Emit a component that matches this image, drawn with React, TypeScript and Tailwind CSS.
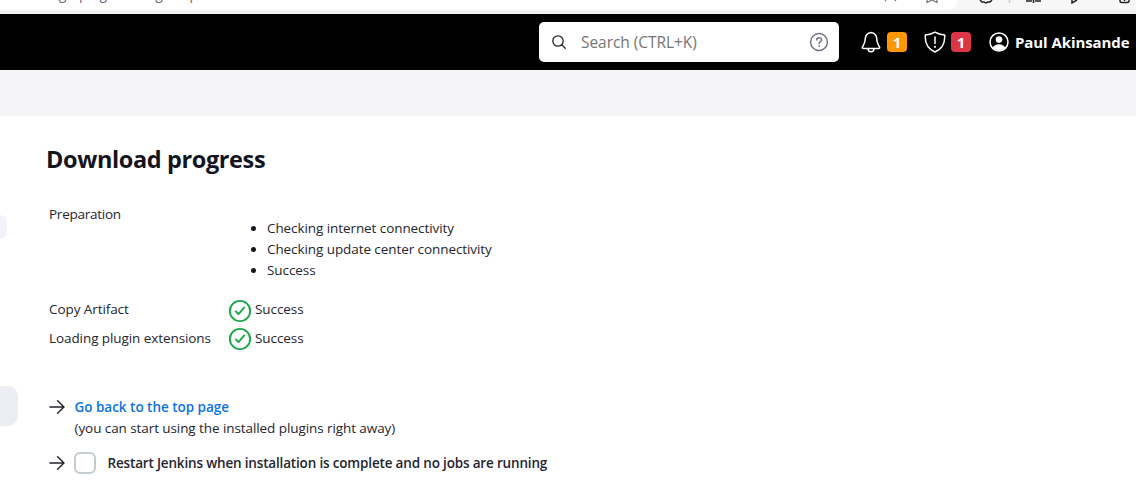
import type { ReactNode } from "react";

const CheckCircle = () => (
  <svg viewBox="0 0 512 512" className="h-[26px] w-[26px] shrink-0" fill="none" stroke="#1ea64b" strokeWidth="38" strokeLinecap="round" strokeLinejoin="round">
    <circle cx="256" cy="256" r="200" />
    <path d="M340 186 L226 316 L174 264" />
  </svg>
);

const Arrow = () => (
  <svg viewBox="0 0 16 16" className="h-4 w-4 shrink-0" fill="none" stroke="#25252f" strokeWidth="1.5" strokeLinecap="round" strokeLinejoin="round">
    <path d="M1 8h14M8.600 1.800L15 8l-6.400 6.200" />
  </svg>
);

const Bullet = ({ children }: { children: ReactNode }) => (
  <li className="flex h-[21px] items-center">
    <span className="-mt-px mr-[11px] h-[5px] w-[5px] rounded-full bg-[#14141f]" />
    {children}
  </li>
);

const BrowserEdge = () => (
  <div className="flex h-3.5 w-full shrink-0 items-start justify-between overflow-hidden border-b-4 border-[#f0f0f0] bg-[#f7f7f7]">
    <div className="flex h-2.5 w-[958px] items-start justify-between overflow-hidden rounded-br-[10px] bg-white">
      <span className="-mt-[16px] ml-[17px] whitespace-nowrap text-[14px] leading-5 tracking-[-0.1px] text-[#6b6b6b]">/manage/pluginManager/updates/</span>
      <svg viewBox="0 0 76 10" className="h-2.5 w-[76px]" fill="none" stroke="#777" strokeWidth="1.2">
        <path d="M4 0l-1 1M13 0l1 1M45 0v2.500l5-2.500 5 2.500V0" />
      </svg>
    </div>
    <svg viewBox="0 0 178 10" className="h-2.5 w-[178px]" fill="none" stroke="#222" strokeWidth="1.5">
      <path d="M22 0l2 2h2l2 1 2-1h2l2-2M68 1h6M77 1h6M75.500 0v3M114 0v3l5-3M162 0v1q0 1.500 1.500 1.500h6q1.500 0 1.500-1.500V0M166.500 0v1" />
      <path d="M51.500 0v3" stroke="#ccc" />
    </svg>
  </div>
);

const Header = () => (
  <header className="flex h-14 shrink-0 items-center bg-black pl-[539px] text-white">
    <div className="flex h-10 w-[300px] shrink-0 items-center rounded-[5px] bg-white pl-[12px] pr-[10px]">
      <svg viewBox="0 0 16 16" className="h-4 w-4" fill="none" stroke="#25252f" strokeWidth="1.3" strokeLinecap="round">
        <circle cx="7" cy="7" r="5.200" /><path d="M11 11l3.300 3.300" />
      </svg>
      <span className="mt-[2px] ml-[14px] grow whitespace-nowrap text-[15.500px] tracking-[-0.05px] text-[#757575]">Search (CTRL+K)</span>
      <svg viewBox="0 0 20 20" className="h-5 w-5" fill="none" stroke="#73738c" strokeWidth="1.5" strokeLinecap="round">
        <circle cx="10" cy="10" r="8.400" /><path d="M7.600 8q.1-2.300 2.500-2.300T12.500 8c0 1.700-2.400 1.700-2.400 3.600" /><circle cx="10.100" cy="14" r=".4" fill="#73738c" strokeWidth="1" />
      </svg>
    </div>
    <svg viewBox="0 0 20 22" className="ml-[22px] h-[22px] w-5 shrink-0" fill="none" stroke="white" strokeWidth="1.500" strokeLinejoin="round" strokeLinecap="round">
      <path d="M10 1.500C6.700 2 4.500 4 4.300 7.500C4.200 12.500 2.500 14 1.400 16.200Q1 17.500 2.300 17.500H17.700Q19 17.500 18.600 16.200C17.500 14 15.800 12.500 15.700 7.500C15.500 4 13.300 2 10 1.500ZM7 17.500q0 3.300 3 3.300t3-3.300" />
    </svg>
    <span className="ml-[6px] flex h-5 w-5 shrink-0 items-center justify-center rounded-[4px] bg-[#fe9700] text-[15px] font-bold">1</span>
    <svg viewBox="0 0 22 22" className="ml-[17px] h-[22px] w-[22px] shrink-0" fill="none" stroke="white" strokeWidth="1.500" strokeLinejoin="round" strokeLinecap="round">
      <path d="M11 1.200Q7 3.700 1.300 4C.8 12 3 17.500 11 21C19 17.500 21.200 12 20.700 4Q15 3.700 11 1.200ZM11 6v6.500" /><circle cx="11" cy="15.800" r=".4" fill="white" />
    </svg>
    <span className="ml-[5px] flex h-5 w-5 shrink-0 items-center justify-center rounded-[4px] bg-[#dc3545] text-[15px] font-bold">1</span>
    <svg viewBox="0 0 20 20" className="ml-[18px] h-5 w-5 shrink-0">
      <circle cx="10" cy="10" r="9" fill="none" stroke="white" strokeWidth="1.500" />
      <circle cx="10" cy="7.600" r="3.300" fill="white" />
      <path d="M3.800 15.800Q5.500 12.300 10 12.300T16.200 15.800Q13.500 18.300 10 18.300T3.800 15.800Z" fill="white" />
    </svg>
    <span className="ml-[6px] whitespace-nowrap text-[15px] font-bold tracking-[-0.08px]">Paul Akinsande</span>
  </header>
);

export default function App() {
  return (
    <div className="flex h-[485px] w-[1136px] flex-col overflow-hidden bg-white font-['Open_Sans','Noto_Sans',sans-serif] text-[#25252f]">
      <BrowserEdge />
      <Header />
      <div className="h-[46px] shrink-0 bg-[#f5f5f8]" />
      <div className="flex grow">
        <aside className="w-[46px] shrink-0">
          <div className="mt-[99px] h-6 w-[7px] rounded-r-full bg-[#f3f3f9]" />
          <div className="mt-[147px] h-10 w-[18px] rounded-r-[10px] bg-[#ececf3]" />
        </aside>
        <main className="text-[13.500px] tracking-[-0.08px]">
          <h1 className="mt-[26px] h-[34px] whitespace-nowrap text-[23.500px] leading-[34px] font-bold tracking-[-0.38px] text-[#14141f]">Download progress</h1>
          <div className="mt-[28px] ml-[3px] flex">
            <span className="w-[202px] leading-[21px] tracking-[-0.25px]">Preparation</span>
            <ul className="mt-[14px]">
              <Bullet>Checking internet connectivity</Bullet>
              <Bullet>Checking update center connectivity</Bullet>
              <Bullet>Success</Bullet>
            </ul>
          </div>
          <div className="mt-[16px] ml-[3px] flex h-[28px] items-center">
            <span className="-mt-[3px] w-[178px]">Copy Artifact</span><CheckCircle /><span className="-mt-[3px] ml-[2px]">Success</span>
          </div>
          <div className="ml-[3px] flex h-[28px] items-center">
            <span className="-mt-px w-[178px] whitespace-nowrap">Loading plugin extensions</span><CheckCircle /><span className="-mt-px ml-[2px]">Success</span>
          </div>
          <div className="mt-[43px] ml-[3px] flex h-[22px] items-center">
            <Arrow /><a href="#" className="ml-[9.500px] font-semibold tracking-[-0.02px] text-[#0b73e5]">Go back to the top page</a>
          </div>
          <p className="ml-[28.500px] h-[21px] leading-[21px]">(you can start using the installed plugins right away)</p>
          <label className="mt-[13px] ml-[3px] flex h-[22px] items-center tracking-[-0.17px]">
            <Arrow />
            <input type="checkbox" className="ml-[9px] h-[22px] w-[22px] shrink-0 appearance-none rounded-[6px] border-2 border-[#c3cdd1] bg-white" />
            <span className="ml-[11.500px] whitespace-nowrap font-semibold">Restart Jenkins when installation is complete and no jobs are running</span>
          </label>
        </main>
      </div>
    </div>
  );
}
